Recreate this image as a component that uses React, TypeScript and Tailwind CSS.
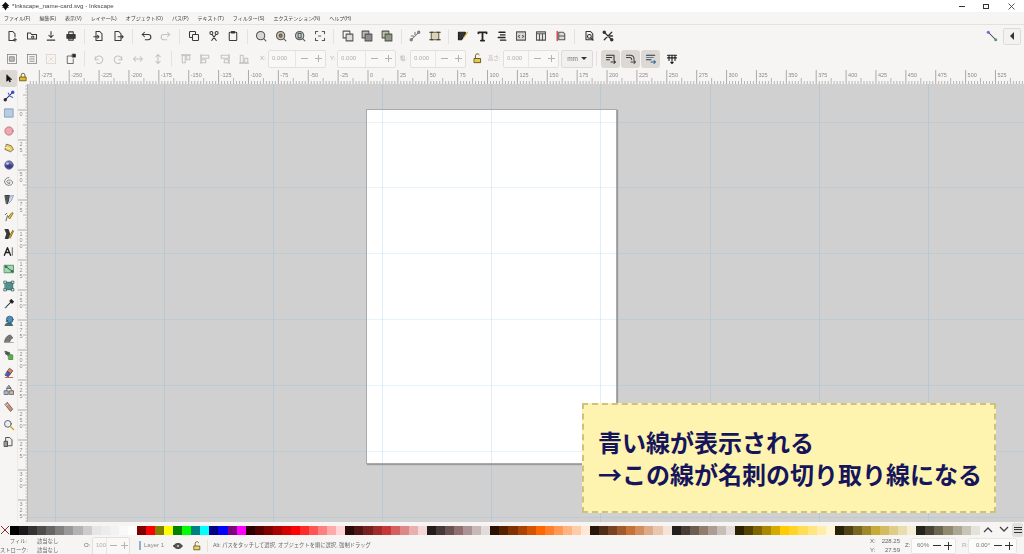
import React from "react";

type Kids = { children: React.ReactNode };

// 16x16 icon shell, every toolbar glyph goes through this
function Ico({ children, size = 12, color = "#3a3a3a", sw = 1.4 }: Kids & { size?: number; color?: string; sw?: number }) {
  return (
    <svg width={size} height={size} viewBox="0 0 16 16" fill="none" stroke={color} strokeWidth={sw} strokeLinecap="round" strokeLinejoin="round">
      {children}
    </svg>
  );
}

function Slot({ children }: Kids) {
  return <div className="w-[19.6px] h-full flex items-center justify-center shrink-0">{children}</div>;
}

function Sep() {
  return (
    <div className="w-[8.4px] h-full flex items-center justify-center shrink-0">
      <div className="w-px h-[15px] bg-[#e4e2e0]" />
    </div>
  );
}

function SpinInput({ w, value }: { w: string; value: string }) {
  return (
    <div className={`${w} h-[18px] flex items-center border border-[#e2e0dd] rounded-[2px] bg-[#f9f8f7] shrink-0`}>
      <span className="pl-[3px] text-[6px] text-[#b0aeab] flex-1">{value}</span>
      <div className="w-[17px] h-full flex items-center justify-center border-l border-[#e8e6e4]">
        <div className="w-[7px] h-px bg-[#b5b3b0]" />
      </div>
      <div className="relative w-[13px] h-full flex items-center justify-center">
        <div className="w-[7px] h-px bg-[#b5b3b0]" />
        <div className="absolute w-px h-[7px] bg-[#b5b3b0]" />
      </div>
    </div>
  );
}

const menus = ["ファイル(F)", "編集(E)", "表示(V)", "レイヤー(L)", "オブジェクト(O)", "パス(P)", "テキスト(T)", "フィルター(S)", "エクステンション(N)", "ヘルプ(H)"];

const doc = <path d="M4 2h5l3 3v9H4z" />;
const topIcons: (React.ReactNode | null)[] = [
  <Ico><path d="M11 14H4V2h5l3 3v4" /><path d="M12 11v4M10 13h4" /></Ico>,
  <Ico><path d="M2 12V4h4l1.5 2H14v6z" /><circle cx="9" cy="9.5" r="1.5" /></Ico>,
  <Ico><path d="M8 2v8M5 7l3 3 3-3M3 13.5h10" /></Ico>,
  <Ico><path d="M5 5V2.5h6V5" /><path d="M2.5 6h11v5h-11z" fill="#3a3a3a" /><path d="M5 10.5h6v3H5z" /></Ico>,
  null,
  <Ico>{doc}<path d="M1 9h7M6 7l2 2-2 2" /></Ico>,
  <Ico>{doc}<path d="M8 9h7M13 7l2 2-2 2" /></Ico>,
  null,
  <Ico><path d="M3 6h8a3 3 0 0 1 0 7H7" /><path d="M6 3L3 6l3 3" /></Ico>,
  <Ico color="#c4c2bf"><path d="M13 6H5a3 3 0 0 0 0 7h4" /><path d="M10 3l3 3-3 3" /></Ico>,
  null,
  <Ico><rect x="2" y="2" width="8" height="8" rx="1" /><rect x="6" y="6" width="8" height="8" rx="1" fill="#f6f5f4" /></Ico>,
  <Ico><circle cx="4.5" cy="4" r="2" /><circle cx="11.5" cy="4" r="2" /><path d="M5.5 6L11 14M10.5 6L5 14" /></Ico>,
  <Ico><rect x="3" y="3" width="10" height="11" rx="1" /><path d="M6 2h4v2H6z" fill="#3a3a3a" /></Ico>,
  null,
  <Ico color="#555"><circle cx="7.5" cy="7.5" r="5.5" fill="#d5d7d6" /><path d="M11.5 11.5l3 3" /></Ico>,
  <Ico color="#555"><circle cx="7.5" cy="7.5" r="5.5" fill="#cfc7b0" /><circle cx="7.5" cy="7.5" r="2" fill="#a08a50" /><path d="M11.5 11.5l3 3" /></Ico>,
  <Ico color="#555"><circle cx="7.5" cy="7.5" r="5.5" fill="#c8d2d2" /><rect x="5.5" y="4.5" width="4" height="6" /><path d="M11.5 11.5l3 3" /></Ico>,
  <Ico color="#555"><path d="M2 5V2h3M11 2h3v3M14 11v3h-3M5 14H2v-3" /><path d="M6 8h4" strokeDasharray="1 1" /></Ico>,
  null,
  <Ico color="#555"><rect x="1.5" y="1.5" width="9" height="9" /><rect x="5.5" y="5.5" width="9" height="9" fill="#dcdcdc" /></Ico>,
  <Ico color="#555"><rect x="1.5" y="1.5" width="9" height="9" fill="#bcbcbc" /><rect x="5.5" y="5.5" width="9" height="9" fill="#8e8e8e" /></Ico>,
  <Ico color="#555"><rect x="1.5" y="1.5" width="9" height="9" fill="#bcc4a0" /><rect x="5.5" y="5.5" width="9" height="9" fill="#8f9880" /></Ico>,
  null,
  <Ico color="#777"><path d="M3 13L13 3M3 8h3M8 3v3" /><circle cx="3" cy="13" r="1.5" /><circle cx="13" cy="3" r="1.5" fill="#999" /></Ico>,
  <Ico color="#6b6240"><rect x="3" y="3" width="10" height="10" fill="#d9d4b8" /><path d="M1 3h4M11 3h4M1 13h4M11 13h4" stroke="#333" /></Ico>,
  null,
  <Ico color="#222" sw={1.6}><path d="M2 3h9v3l-5 7H2z" fill="#333" /><path d="M9 10l5-7" stroke="#d8b030" /></Ico>,
  <Ico color="#222" sw={2.2} size={13}><path d="M3 4V3h10v1M8 3v10M6 13h4" /></Ico>,
  <Ico color="#222" sw={1.8}><path d="M4 3h8M6 6.5h6M3 10h9M6 13.5h7" /></Ico>,
  <Ico color="#555"><rect x="2" y="2.5" width="12" height="11" fill="#d8d8d8" /><path d="M6 7L4.5 8.5 6 10M10 7l1.5 1.5L10 10" /></Ico>,
  <Ico color="#555"><rect x="2" y="2.5" width="12" height="11" fill="#e8e8e8" /><path d="M2 5h12M6 5v8.5M10 5v8.5" /></Ico>,
  <Ico color="#555"><path d="M5 3h6l2 2v3H5zM5 8h8v5H5z" fill="#dcdcdc" /><path d="M3 2v12" stroke="#d05050" strokeWidth="2" /></Ico>,
  null,
  <Ico color="#333"><path d="M4 2h6l3 3v8H4z" /><circle cx="8.5" cy="8.5" r="2.5" /><path d="M10.5 10.5l3 3" /></Ico>,
  <Ico color="#333" sw={1.7}><path d="M3 3l10 10M13 3L3 13" /><circle cx="3" cy="3" r="1.5" fill="#333" /><circle cx="13" cy="13" r="1.5" fill="#333" /><path d="M9 8h5" /></Ico>,
];

const dim = "#c4c2bf";
const secondIcons: (React.ReactNode | null)[] = [
  <Ico color="#777" sw={1}><rect x="2" y="2" width="12" height="12" strokeDasharray="1.5 1" /><rect x="5" y="5" width="6" height="6" fill="#bbb" /></Ico>,
  <Ico color="#777" sw={1}><rect x="2" y="2" width="12" height="12" strokeDasharray="1.5 1" /><path d="M5 5h6M5 8h6M5 11h6" /></Ico>,
  <Ico color="#d8cfc4" sw={1}><rect x="2" y="2" width="12" height="12" strokeDasharray="1.5 1" /><path d="M5 5l6 6M11 5l-6 6" stroke="#e8cfc4" /></Ico>,
  <Ico color="#444" sw={1}><path d="M10 4H3v10h8V8" /><rect x="10" y="1.5" width="4" height="4" fill="#222" /></Ico>,
  null,
  <Ico color={dim}><path d="M3 9a5 5 0 1 1 2 4" /><path d="M3 5v4h4" /></Ico>,
  <Ico color={dim}><path d="M13 9a5 5 0 1 0-2 4" /><path d="M13 5v4H9" /></Ico>,
  <Ico color={dim}><path d="M2 8h12M5 5L2 8l3 3M11 5l3 3-3 3" /></Ico>,
  <Ico color={dim}><path d="M8 2v12M5 5l3-3 3 3M5 11l3 3 3-3" /></Ico>,
  null,
  <Ico color={dim}><path d="M2 2.5h12" /><rect x="3" y="3" width="4" height="10" /><rect x="9" y="3" width="4" height="6" /></Ico>,
  <Ico color={dim}><path d="M2.5 2v12" /><rect x="3" y="3" width="10" height="4" /><rect x="3" y="9" width="6" height="4" /></Ico>,
  <Ico color={dim}><path d="M13.5 2v12" /><rect x="3" y="3" width="10" height="4" /><rect x="7" y="9" width="6" height="4" /></Ico>,
  <Ico color={dim}><path d="M2 13.5h12" /><rect x="3" y="3" width="4" height="10" /><rect x="9" y="7" width="4" height="6" /></Ico>,
];

const snapIcons = [
  <Ico color="#333"><path d="M2 3h10v6" /><path d="M2 6h7M2 9h4" /><path d="M8 12h6M12 10l2 2-2 2" /></Ico>,
  <Ico color="#444"><path d="M2 3h6a5 5 0 0 1 4 5v1" /><path d="M2 6h5a3 3 0 0 1 2 3" /><path d="M8 12h6M12 10l2 2-2 2" /></Ico>,
  <Ico color="#333"><path d="M2 3h11" /><path d="M2 6h9" stroke="#4a7fb0" /><path d="M2 9h6" /><path d="M8 12h6M12 10l2 2-2 2" stroke="#2a5f90" /></Ico>,
];

const leftTools = [
  <Ico color="#111" size={9}><path d="M5 2v11l3-3 2 4 1.5-.8-2-3.7H13z" fill="#111" /></Ico>,
  <Ico color="#223"><path d="M3 13L13 3" /><circle cx="3" cy="13" r="1.5" fill="#333" /><circle cx="13" cy="3" r="1.6" fill="#3a50d0" stroke="#3a50d0" /><path d="M7 4l2 4 4 2" stroke="#4060e0" /></Ico>,
  <Ico color="#6f8fb0" sw={1}><rect x="2.5" y="2.5" width="11" height="11" fill="#b8cde4" /></Ico>,
  <Ico color="#b06070" sw={1}><circle cx="8" cy="8" r="5.5" fill="#f0a8b0" /></Ico>,
  <Ico color="#6b5a20" sw={1}><path d="M5 3l6 2 3 5-4 3-7-3z" fill="#e8d070" /><path d="M3 7l6 2" stroke="#fff" /></Ico>,
  <Ico color="#404080" sw={1}><circle cx="8" cy="8" r="5.5" fill="#7078b8" /><path d="M3 9a6 6 0 0 0 10 1l-3-3z" fill="#3a3f80" /><circle cx="6" cy="6" r="1.8" fill="#c8ccdf" stroke="none" /></Ico>,
  <Ico color="#777" sw={1.2}><path d="M8 8a1.5 1.5 0 0 1 1.5 1.5A3 3 0 0 1 5 7a4.5 4.5 0 0 1 8 2.5A6 6 0 0 1 2 8a6.5 6.5 0 0 1 6-6" /></Ico>,
  <Ico color="#333" sw={1.2}><path d="M3 2h6v1l-3 10h-1z" fill="#555" /><path d="M9 3l5-1-3 7-3 3" stroke="#7fa0c0" fill="#cfdbe8" /></Ico>,
  <Ico color="#444" sw={1.1}><path d="M4 13l2-7 2 2" /><path d="M7 8l5-6 1.5 1-4 7z" fill="#e8c038" stroke="#806a10" /><path d="M3 5l2-2" /></Ico>,
  <Ico color="#222" sw={1.1}><path d="M3 2h4l2 6-2 6H3l2-6z" fill="#3a3a3a" /><path d="M8 12l5-9 1 1-4 9z" fill="#d8b030" stroke="#806a10" /></Ico>,
  <Ico color="#222" sw={2} size={11}><path d="M2 13.5L6.5 2.5l4.5 11M4 9.5h5" /><path d="M13.5 2.5v11" strokeWidth="1" /></Ico>,
  <Ico color="#3a7a50" sw={1}><rect x="2" y="3" width="12" height="10" fill="#9ed8b0" /><path d="M4 5l8 6" stroke="#333" /><circle cx="4" cy="5" r="1.2" fill="#333" /><circle cx="12" cy="11" r="1.2" fill="#333" /></Ico>,
  <Ico color="#2a5a5a" sw={1}><rect x="3" y="3" width="10" height="10" fill="#4f9090" /><rect x="1.5" y="1.5" width="3" height="3" fill="#eee" /><rect x="11.5" y="1.5" width="3" height="3" fill="#eee" /><rect x="1.5" y="11.5" width="3" height="3" fill="#eee" /><rect x="11.5" y="11.5" width="3" height="3" fill="#eee" /></Ico>,
  <Ico color="#222" sw={1.4}><path d="M3 13l7-7" /><path d="M9 4l3 3 2-2-3-3z" fill="#222" /><path d="M3 13l2-1" stroke="#5a90c0" /></Ico>,
  <Ico color="#2a5070" sw={1}><circle cx="9" cy="6" r="4.5" fill="#4f8fb8" /><path d="M3 14h10l-2-3H5z" fill="#3a7a5a" /><path d="M4 9l2-2" stroke="#333" /></Ico>,
  <Ico color="#555" sw={1}><path d="M2 13c1-5 4-9 8-9l3 4-3 2-1 3z" fill="#777" /><path d="M2 14h12" stroke="#999" /></Ico>,
  <Ico color="#446" sw={1}><path d="M3 3l6 2-1 4-4-2z" fill="#555" /><path d="M7 7l6 1v6H8z" fill="#58b048" stroke="#3a8030" /></Ico>,
  <Ico color="#533" sw={1}><path d="M9 2l4 3-3 4-4-3z" fill="#e88060" /><path d="M6 6l4 3-3 4-4-2z" fill="#3060d0" /><path d="M3 14h10" stroke="#c03030" /></Ico>,
  <Ico color="#556" sw={1}><path d="M8 2l3 4H5z" fill="#909aa8" /><rect x="2" y="9" width="5" height="5" fill="#a8b8d0" /><rect x="9" y="9" width="5" height="5" fill="#c8b890" /><path d="M6 6l-2 3M10 6l2 3" /></Ico>,
  <Ico color="#6a4a40" sw={1}><path d="M6 2l7 9-3 3-7-9z" fill="#c89080" /><path d="M4 7l3-3" stroke="#eee" /></Ico>,
  <Ico color="#556" sw={1.2}><circle cx="6.5" cy="6.5" r="4.5" fill="#e8eef2" /><path d="M10 10l4 4" stroke="#d8a820" strokeWidth="2" /></Ico>,
  <Ico color="#444" sw={1.2}><path d="M4 2h5l3 3v8H4z" fill="#eee" /><path d="M2 7h4v7H2z" fill="#999" /></Ico>,
];

const palette = [
  "#000000","#1a1a1a","#333333","#4d4d4d","#666666","#808080","#999999","#b3b3b3","#cccccc","#e6e6e6","#ececec","#f2f2f2","#f9f9f9","#ffffff",
  "#800000","#ff0000","#808000","#ffff00","#008000","#00ff00","#008080","#00ffff","#000080","#0000ff","#800080","#ff00ff",
  "#2b0000","#550000","#800000","#aa0000","#d40000","#ff0000","#ff2a2a","#ff5555","#ff8080","#ffaaaa","#ffd5d5",
  "#280b0b","#501616","#782121","#a02c2c","#c83737","#d35f5f","#de8787","#e9afaf","#f4d7d7",
  "#241c1c","#483737","#6c5353","#916f6f","#ac9393","#c8b7b7","#e3dbdb",
  "#2b1100","#552200","#803300","#aa4400","#d45500","#ff6600","#ff7f2a","#ff9955","#ffb380","#ffccaa","#ffe6d5",
  "#28170b","#502d16","#784421","#a05a2c","#c87137","#d38d5f","#deaa87","#e9c6af","#f4e3d7",
  "#241f1c","#483e37","#6c5d53","#917c6f","#ac9d93","#c8beb7","#e3dedb",
  "#2b2200","#554400","#806600","#aa8800","#d4aa00","#ffcc00","#ffd42a","#ffdd55","#ffe680","#ffeeaa","#fff6d5",
  "#28220b","#504416","#786721","#a0892c","#c8ab37","#d3bc5f","#decd87","#e9ddaf","#f4eed7",
  "#24221c","#484537","#6c6753","#918a6f","#aca793","#c8c4b7","#e3e2db",
];

const PX = 29.88;

function HRuler() {
  const zero = 368 - 28;
  const ticks: React.ReactNode[] = [];
  for (let i = -114; i <= 220; i++) {
    const x = zero + (i * PX) / 10;
    if (x < 0 || x > 996) continue;
    const major = i % 10 === 0;
    const h = major ? 14 : i % 5 === 0 ? 6 : 3;
    ticks.push(<line key={i} x1={x} x2={x} y1={14 - h} y2={14} stroke={major ? "#8a8a8a" : "#9a9a9a"} strokeWidth={0.7} />);
    if (major) {
      ticks.push(
        <text key={"t" + i} x={x + 2} y={7} fontSize={5.5} fill="#8a8a8a">
          {(i * 2.5).toString()}
        </text>
      );
    }
  }
  return (
    <svg width="996" height="14" className="block">
      {ticks}
    </svg>
  );
}

function VRuler() {
  const zero = 110 - 84;
  const ticks: React.ReactNode[] = [];
  for (let i = 0; i <= 147; i++) {
    const y = zero + (i * 30) / 10 - 30;
    const major = i % 10 === 0;
    const h = major ? 10 : i % 5 === 0 ? 5 : 2.5;
    ticks.push(<line key={i} x1={10 - h} x2={10} y1={y} y2={y} stroke={major ? "#8a8a8a" : "#9a9a9a"} strokeWidth={0.7} />);
    if (major && i > 0) {
      const label = ((i - 10) * 2.5).toString();
      label.split("").forEach((c, k) => {
        ticks.push(
          <text key={`${i}-${k}`} x={1.5} y={y + 5.5 + k * 6} fontSize={5.5} fill="#8a8a8a">
            {c}
          </text>
        );
      });
    }
  }
  return (
    <svg width="10" height="438" className="block">
      {ticks}
    </svg>
  );
}

const guideX = [55, 164, 273, 382, 491, 600, 710, 819, 928];
const guideY = [122, 187, 253, 319, 385, 451, 517];

export default function App() {
  return (
    <div className="w-[1024px] h-[554px] overflow-hidden flex flex-col bg-[#f6f5f4] font-['Liberation_Sans','Noto_Sans_CJK_JP',sans-serif] text-[#555]">
      {/* title bar */}
      <div className="h-[12px] bg-white flex items-center shrink-0 relative blur-[0.35px]">
        <svg width="9" height="9" viewBox="0 0 16 16" className="ml-[1px]">
          <path d="M8 0L1 7l3 0-2 3 3 0 3 5 3-5 3 0-2-3 3 0z" fill="#111" />
        </svg>
        <span className="ml-[2px] text-[6.2px] text-[#444] leading-none">*Inkscape_name-card.svg - Inkscape</span>
        <div className="ml-auto flex items-center">
          <div className="w-[6px] h-px bg-[#333] mr-[18px]" />
          <div className="w-[6px] h-[5px] border border-[#333] mr-[19px]" />
          <svg width="7" height="7" viewBox="0 0 7 7" className="mr-[9px]">
            <path d="M.5.5l6 6M6.5.5l-6 6" stroke="#333" strokeWidth="0.8" />
          </svg>
        </div>
      </div>

      {/* menu */}
      <div className="h-[13px] flex items-center gap-[9px] pl-[4px] border-b border-[#e4e2e0] shrink-0 blur-[0.35px]">
        {menus.map((m) => (
          <span key={m} className="text-[5px] leading-none text-[#444] whitespace-nowrap">
            {m}
          </span>
        ))}
      </div>

      {/* commands bar */}
      <div className="h-[22px] flex items-center pl-[2.2px] shrink-0 blur-[0.35px]">
        {topIcons.map((ic, i) => (ic === null ? <Sep key={i} /> : <Slot key={i}>{ic}</Slot>))}
        <div className="ml-auto flex items-center gap-[5px] pr-[3px]">
          <Ico size={12} color="#444">
            <path d="M3 3l10 10" />
            <circle cx="3" cy="3" r="2" fill="#6a6ae0" stroke="none" />
            <circle cx="13" cy="13" r="2" fill="#4aa070" stroke="none" />
          </Ico>
          <div className="w-[18px] h-[17px] flex items-center justify-center rounded-[2px] border border-[#dddbd8] bg-[#f3f2f0]">
            <div className="w-0 h-0 border-y-[4px] border-y-transparent border-r-[4px] border-r-[#333]" />
          </div>
        </div>
      </div>

      {/* tool controls bar */}
      <div className="h-[23px] flex items-center pl-[2.2px] shrink-0 blur-[0.35px]">
        {secondIcons.map((ic, i) => (ic === null ? <Sep key={i} /> : <Slot key={i}>{ic}</Slot>))}
        <span className="ml-[6px] w-[8px] text-[6px] text-[#b0aeab]">X:</span>
        <SpinInput w="w-[58px]" value="0.000" />
        <span className="ml-[4px] w-[7px] text-[6px] text-[#b0aeab]">Y:</span>
        <SpinInput w="w-[59px]" value="0.000" />
        <span className="ml-[4px] w-[10px] text-[5.3px] text-[#b0aeab] whitespace-nowrap">幅:</span>
        <SpinInput w="w-[56px]" value="0.000" />
        <div className="w-[22px] flex justify-center">
          <Ico size={11} color="#6b5a10">
            <path d="M5 8V4a3 3 0 0 1 5.5-1.5" />
            <rect x="3.5" y="8" width="9" height="6" fill="#e8c850" />
          </Ico>
        </div>
        <span className="w-[15px] text-[5.3px] text-[#b0aeab] whitespace-nowrap">高さ:</span>
        <SpinInput w="w-[56px]" value="0.000" />
        <div className="ml-[2px] w-[32px] h-[18px] flex items-center justify-center gap-[3px] rounded-[2px] border border-[#dddbd8] bg-[#f1f0ee]">
          <span className="text-[6.5px] text-[#777]">mm</span>
          <div className="w-0 h-0 border-x-[3.5px] border-x-transparent border-t-[3.5px] border-t-[#333]" />
        </div>
        <div className="ml-[3px] mr-[4px] w-px h-[15px] bg-[#e4e2e0]" />
        {snapIcons.map((ic, i) => (
          <div key={i} className="w-[19px] h-[18px] mr-px flex items-center justify-center rounded-[3px] bg-[#dcd8d4]">
            {ic}
          </div>
        ))}
        <div className="ml-[1px] w-[19px] flex justify-center">
          <Ico color="#222" sw={1.5}>
            <path d="M2 3h12M2 6.5h12M4 3v7M8 3v7M12 3v7" />
            <path d="M8 11v3M6.5 12.5L8 14l1.5-1.5" />
          </Ico>
        </div>
      </div>

      {/* workspace */}
      <div className="flex-1 min-h-0 flex">
        <div className="w-[18px] shrink-0 flex flex-col border-r border-[#eceae8] blur-[0.35px]">
          {leftTools.map((ic, i) => (
            <div key={i} className={`h-[17.3px] flex items-center justify-center shrink-0 ${i === 0 ? "bg-[#dcd8d4] rounded-[2px]" : ""}`}>
              {ic}
            </div>
          ))}
        </div>
        <div className="flex-1 min-w-0 flex flex-col">
          <div className="h-[14px] flex shrink-0 blur-[0.35px]">
            <div className="w-[10px] shrink-0 flex items-center justify-center">
              <Ico size={10} color="#6b5a10">
                <path d="M5 8V5a3 3 0 0 1 6 0v3" />
                <rect x="3" y="8" width="10" height="6" fill="#e0b830" />
              </Ico>
            </div>
            <HRuler />
          </div>
          <div className="flex-1 min-h-0 flex">
            <div className="w-[10px] shrink-0 overflow-hidden border-r border-[#b5b5b5] blur-[0.35px]">
              <VRuler />
            </div>
            <div className="relative flex-1 min-w-0 bg-[#d0d0d0] overflow-hidden">
              {/* page sits at a fixed spot on the drawing canvas */}
              <div className="absolute left-[338px] top-[25px] w-[251px] h-[355px] bg-white border border-[#aaaaaa] shadow-[1px_1px_1px_#9a9a9a]" />
              {guideX.map((x) => (
                <div key={x} className="absolute top-0 bottom-0 w-px bg-[#5fb0e0]/20" style={{ left: x - 28 }} />
              ))}
              {guideY.map((y) => (
                <div key={y} className="absolute left-0 right-0 h-px bg-[#5fb0e0]/15" style={{ top: y - 84 }} />
              ))}
              {/* note pasted over the screenshot */}
              <div className="absolute left-[554px] top-[319px] w-[414px] h-[110px] flex flex-col justify-center pl-[14px] border-2 border-dashed border-[#cfc27c] bg-[#fff3b0] font-['Noto_Sans_CJK_JP',sans-serif] font-bold text-[24px] leading-[32px] text-[#15155c] whitespace-nowrap">
                <div>青い線が表示される</div>
                <div>→この線が名刺の切り取り線になる</div>
              </div>
            </div>
          </div>
        </div>
      </div>

      {/* palette */}
      <div className="h-[15px] flex items-center shrink-0 relative blur-[0.2px]">
        <svg width="10" height="10" viewBox="0 0 10 10" className="shrink-0">
          <path d="M1 1l8 8M9 1l-8 8" stroke="#8a3030" strokeWidth="1" />
        </svg>
        <div className="flex h-[9px] mt-[2px]">
          {palette.map((c, i) => (
            <div key={i} className="w-[9.07px] h-full" style={{ backgroundColor: c }} />
          ))}
        </div>
        <div className="ml-auto flex items-center gap-[3px] pr-[1px]">
          <div className="flex items-center gap-[6px]">
            <svg width="10" height="7" viewBox="0 0 10 7">
              <path d="M1 6l4-4 4 4" stroke="#444" strokeWidth="1.3" fill="none" />
            </svg>
            <svg width="10" height="7" viewBox="0 0 10 7">
              <path d="M1 1l4 4 4-4" stroke="#444" strokeWidth="1.3" fill="none" />
            </svg>
          </div>
          <div className="w-[11px] h-[14px] flex flex-col items-center justify-center gap-[1.5px] rounded-[2px] bg-[#e2e0dd]">
            <div className="w-[8px] h-px bg-[#333]" />
            <div className="w-[8px] h-px bg-[#333]" />
            <div className="w-[8px] h-px bg-[#333]" />
          </div>
        </div>
      </div>

      {/* status bar */}
      <div className="h-[17px] flex items-center shrink-0 text-[5.3px] text-[#666] blur-[0.3px]">
        <div className="w-[27px] shrink-0 text-right leading-[9px] whitespace-nowrap">
          <div>フィル:</div>
          <div>ストローク:</div>
        </div>
        <div className="ml-[10px] w-[40px] shrink-0 leading-[9px]">
          <div>該当なし</div>
          <div>該当なし</div>
        </div>
        <span className="ml-[7px] w-[8px] text-[6px]">O:</span>
        <SpinInput w="w-[38px]" value="100" />
        <div className="ml-[9px] w-[2px] h-[9px] bg-[#8fb0d0]" />
        <span className="ml-[3px] text-[6px] text-[#888] whitespace-nowrap">Layer 1</span>
        <div className="ml-[9px]">
          <Ico size={10} color="#333">
            <path d="M1 8c2-3 4-4 7-4s5 1 7 4c-2 3-4 4-7 4s-5-1-7-4z" fill="#555" />
            <circle cx="8" cy="8" r="1.5" fill="#ddd" stroke="none" />
          </Ico>
        </div>
        <div className="ml-[9px]">
          <Ico size={10} color="#6b5a10">
            <path d="M5 8V4a3 3 0 0 1 5.5-1.5" />
            <rect x="3.5" y="8" width="9" height="6" fill="#e8d470" />
          </Ico>
        </div>
        <div className="ml-[5px] w-px h-[12px] bg-[#e4e2e0]" />
        <span className="ml-[5px] whitespace-nowrap">Alt: パスをタッチして選択, オブジェクトを順に選択, 強制ドラッグ</span>
        <div className="ml-auto flex items-center pr-[7px]">
          <div className="w-[30px] leading-[9px] flex flex-col text-[6px]">
            <div className="flex justify-between"><span>X:</span><span>228.25</span></div>
            <div className="flex justify-between"><span>Y:</span><span>27.59</span></div>
          </div>
          <span className="ml-[5px] w-[6px] text-[6px]">Z:</span>
          <div className="w-[45px] h-[16px] flex items-center rounded-[2px] bg-[#fbfbfa] border border-[#e8e6e4]">
            <span className="pl-[5px] flex-1 text-[6px] text-[#777]">60%</span>
            <div className="w-[8px] h-px bg-[#333] mr-[3px]" />
            <div className="relative w-[8px] h-[8px] mr-[3px] flex items-center justify-center">
              <div className="w-[8px] h-px bg-[#333]" />
              <div className="absolute w-px h-[8px] bg-[#333]" />
            </div>
          </div>
          <span className="ml-[6px] w-[6px] text-[6px] text-[#aaa]">R:</span>
          <div className="w-[49px] h-[16px] flex items-center rounded-[2px] bg-[#fbfbfa] border border-[#e8e6e4]">
            <span className="pl-[7px] flex-1 text-[6px] text-[#777]">0.00°</span>
            <div className="w-[8px] h-px bg-[#333] mr-[3px]" />
            <div className="relative w-[8px] h-[8px] mr-[3px] flex items-center justify-center">
              <div className="w-[8px] h-px bg-[#333]" />
              <div className="absolute w-px h-[8px] bg-[#333]" />
            </div>
          </div>
        </div>
      </div>
    </div>
  );
}
